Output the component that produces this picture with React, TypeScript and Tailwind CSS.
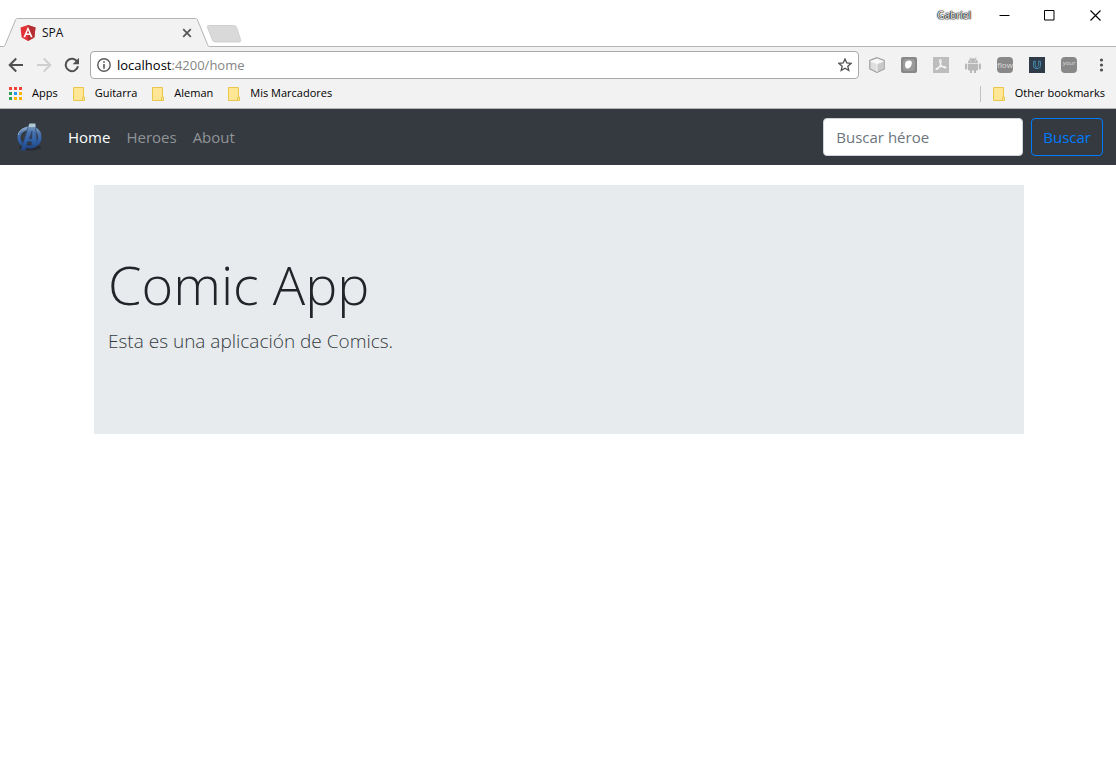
import React from "react";

const uiFont = "font-['Open_Sans','Noto_Sans',sans-serif]";

function AngularIcon() {
  return (
    <svg width="16" height="16" viewBox="0 0 16 16" aria-hidden="true">
      <path d="M8 0 15.5 2.6 14.3 12.5 8 16 1.7 12.5.5 2.6Z" fill="#e23237" />
      <path d="M8 0 15.5 2.6 14.3 12.5 8 16Z" fill="#b52e31" />
      <path d="M8 1.8 3.4 12.2h1.8l.9-2.3h3.8l.9 2.3h1.8ZM8 5.2l1.3 3.2H6.7Z" fill="#fff" fillRule="evenodd" />
    </svg>
  );
}

function Folder() {
  return (
    <svg width="12" height="14" viewBox="0 0 12 14" aria-hidden="true">
      <path d="M.5.5h10v9.5h1v3.5H.5Z" fill="#ffe694" stroke="#e9c64d" />
      <path d="M9.5 13V10.5h1" fill="none" stroke="#e9c64d" />
    </svg>
  );
}

function AppsGrid() {
  const colors = ["#f44336", "#f44336", "#f44336", "#2e9e5b", "#2196f3", "#ffb300", "#2e9e5b", "#ffb300", "#ffb300"];
  return (
    <svg width="13" height="13" viewBox="0 0 13 13" aria-hidden="true">
      {colors.map((c, i) => (
        <rect key={i} x={(i % 3) * 5} y={Math.floor(i / 3) * 5} width="3" height="3" fill={c} />
      ))}
    </svg>
  );
}

function TabStrip() {
  return (
    <div className="flex h-[47px] items-start border-b border-[#b4b4b4] bg-white">
      <div className="relative mt-[18px] flex h-[29px] w-[210px] shrink-0 items-center pl-5 pr-[18px]">
        <svg className="absolute inset-0" width="210" height="29" viewBox="0 0 210 29" aria-hidden="true">
          <path d="M0 28.5H3C4.500 28.500 4.800 27.500 5.300 26.500L15.500 2C16 .9 16.500.5 17.500.5H195.500C196.500.5 197 .9 197.500 2L207.500 26.500C208 27.800 208.500 28.500 210 28.500V29H0Z" fill="#f2f2f2" />
          <path d="M0 28.500H3C4.500 28.500 4.800 27.500 5.300 26.500L15.500 2C16 .9 16.500.5 17.500.5H195.500C196.500.5 197 .9 197.500 2L207.500 26.500C208 27.800 208.500 28.500 210 28.500" fill="none" stroke="#b4b4b4" />
        </svg>
        <span className="relative flex flex-1 items-center gap-1.5 text-xs text-[#111]">
          <AngularIcon />
          SPA
        </span>
        <button aria-label="Close tab" className="relative">
          <svg width="10" height="10" viewBox="0 0 10 10">
            <path d="m1.200 1.200 7.600 7.600m0-7.600-7.600 7.600" stroke="#555" strokeWidth="1.700" />
          </svg>
        </button>
      </div>
      <button aria-label="New tab" className="-ml-1 mt-[25px]">
        <svg width="36" height="18" viewBox="0 0 36 18">
          <path d="M2.500.5H27.500C29 .5 30 1 30.500 2.300L34.500 14.500C35 16 34.500 17 33 17H9.500C8 17 7 16.500 6.500 15L1.500 2.500C1 1.200 1.500.5 2.500.5Z" fill="#d9d9d9" stroke="#cfcfcf" />
        </svg>
      </button>
      <div className="ml-auto flex items-center pr-[15px] pt-[7px]">
        <span className="mr-7 text-[10px] leading-4 text-white [text-shadow:0_0_1px_#000,0_0_1px_#000,0_0_1px_#000,0_0_2px_#333]">Gabriel</span>
        <button aria-label="Minimize" className="mr-[34px]">
          <svg width="11" height="12" viewBox="0 0 11 12"><path d="M.5 6.500h10" stroke="#000" /></svg>
        </button>
        <button aria-label="Maximize" className="mr-[35px]">
          <svg width="11" height="12" viewBox="0 0 11 12"><path d="M.5 1.500h9.500v9.500H.5Z" fill="none" stroke="#000" /></svg>
        </button>
        <button aria-label="Close">
          <svg width="11" height="12" viewBox="0 0 11 12"><path d="m.5 1.500 10 10m0-10-10 10" stroke="#000" strokeWidth="1.100" /></svg>
        </button>
      </div>
    </div>
  );
}

function Extensions() {
  return (
    <div className="flex items-center gap-4">
      <button aria-label="Cube">
        <svg width="16" height="16" viewBox="0 0 16 16">
          <path d="M8 .7 15.200 3.500V12L8 15.400.8 12V3.500Z" fill="#dedede" stroke="#999" strokeWidth="1.100" />
          <path d="M8 1.500 14.300 4 8 6.700 1.700 4Z" fill="#f7f7f7" />
          <path d="M8 7 14.500 4.300v7.300L8 14.700Z" fill="#c9c9c9" />
          <path d="M8 6.800v8M1.500 4.200 8 6.800l6.500-2.600" fill="none" stroke="#fafafa" strokeWidth=".8" />
        </svg>
      </button>
      <button aria-label="Shield">
        <svg width="16" height="16" viewBox="0 0 16 16">
          <rect width="16" height="16" rx="2" fill="#888" />
          <rect x="2" y="2" width="12" height="12" rx="3" fill="#9b9b9b" />
          <path d="M5 4.500C7.500 3 11 3.300 10.800 6c-.1 3-1.800 5.500-4.300 5.500C3.700 11.500 3.500 6.500 5 4.500Z" fill="#fff" />
        </svg>
      </button>
      <button aria-label="PDF">
        <svg width="16" height="16" viewBox="0 0 16 16">
          <rect width="16" height="16" fill="#bdbdbd" />
          <path d="M7.300 2.500C8.800 2.300 8 5.500 7.500 7.200 6.500 10 4.500 13 3.200 12.500 2 11.500 7 9.600 10 9.500c3.500 0 3.500 1.700 2 1.500C9.500 10.500 6.500 7 6.600 4c0-1 .3-1.500.7-1.500Z" fill="none" stroke="#f5f5f5" strokeWidth="1.100" />
        </svg>
      </button>
      <button aria-label="Android">
        <svg width="16" height="16" viewBox="0 0 16 16" fill="#b9b9b9">
          <path d="M3 6C3 3.800 4.200 2.500 5.400 1.900L4.500.4l.5-.3.900 1.500a6 6 0 0 1 4.200 0L11 .1l.5.3-.9 1.500C11.800 2.500 13 3.800 13 6Z" />
          <path d="M3 6.800h10v5.700c0 .6-.4 1-1 1h-1V16H9v-2.500H7V16H5v-2.500H4c-.6 0-1-.4-1-1Z" />
          <rect y="6.500" width="2.200" height="6" rx="1.100" /><rect x="13.800" y="6.500" width="2.200" height="6" rx="1.100" />
          <path d="M5.200 3.500h1v1h-1Zm4.600 0h1v1h-1Z" fill="#f2f2f2" />
        </svg>
      </button>
      <button className="flex size-4 items-center justify-center overflow-hidden rounded-sm bg-[#888] text-[8px] leading-none text-[#ddd]">flow</button>
      <button aria-label="Udacity">
        <svg width="16" height="16" viewBox="0 0 16 16">
          <path d="M0 0h16v16H0Z" fill="#303b49" />
          <path d="M4.500 4.500 6.200 4V7.500C6.200 9.500 7 10.800 8.300 11.500 6 12 4.500 10.700 4.500 8.500ZM9.700 4 11.500 4.500V8.500C11.500 10.500 10.200 11.700 8.300 11.500M9.700 4V8C9.700 9 9.200 9.700 8.200 10" fill="none" stroke="#4592b8" strokeWidth=".9" />
        </svg>
      </button>
      <button className="flex size-4 items-center justify-center overflow-hidden rounded-sm bg-[#888] pb-1 text-[6px] leading-none text-[#ddd]">your</button>
    </div>
  );
}

function Toolbar() {
  return (
    <div className="flex h-8 items-end pl-2 pr-3">
      <div className="flex h-7 items-center">
        <button aria-label="Back" className="mr-3">
          <svg width="16" height="16" viewBox="0 0 16 16"><path d="M15 8H2M8.200 1.500 1.700 8l6.500 6.500" fill="none" stroke="#505050" strokeWidth="2" /></svg>
        </button>
        <button aria-label="Forward" className="mr-3">
          <svg width="16" height="16" viewBox="0 0 16 16"><path d="M1 8h13M7.800 1.500 14.300 8l-6.500 6.500" fill="none" stroke="#cfcfcf" strokeWidth="2" /></svg>
        </button>
        <button aria-label="Reload" className="mr-2.5">
          <svg width="16" height="16" viewBox="0 0 16 16"><path d="M13.200 4.700A6.200 6.200 0 1 0 14 9.300" fill="none" stroke="#505050" strokeWidth="2" /><path d="M15 .8V7.200H8.700Z" fill="#505050" /></svg>
        </button>
      </div>
      <div className="mr-2.5 flex h-7 min-w-0 flex-1 items-center rounded-sm border border-[#a9a9a9] bg-white px-1.5">
        <svg width="14" height="14" viewBox="0 0 14 14" aria-hidden="true">
          <circle cx="7" cy="7" r="6.200" fill="none" stroke="#5a5a5a" strokeWidth="1.400" />
          <path d="M6.200 3.200h1.600v1.600H6.200ZM6.200 6h1.600v4.800H6.200Z" fill="#5a5a5a" />
        </svg>
        <span className="ml-1.5 flex-1 text-[13px] leading-5 text-[#858585]"><span className="text-black">localhost</span>:4200/home</span>
        <button aria-label="Bookmark this page">
          <svg width="14" height="14" viewBox="0 0 14 14"><path d="m7 1 1.800 4 4.200.4-3.200 2.800 1 4.300L7 10.200l-3.800 2.300 1-4.300L1 5.400 5.200 5Z" fill="none" stroke="#505050" strokeWidth="1.300" /></svg>
        </button>
      </div>
      <div className="flex h-7 items-center">
        <Extensions />
        <button aria-label="Menu" className="ml-[22px]">
          <svg width="5" height="14" viewBox="0 0 5 14" fill="#505050"><circle cx="2.500" cy="2" r="1.600" /><circle cx="2.500" cy="7" r="1.600" /><circle cx="2.500" cy="12" r="1.600" /></svg>
        </button>
      </div>
    </div>
  );
}

function Bookmarks() {
  return (
    <div className="flex h-[29px] items-center gap-[15px] pl-[9px] pr-[11px] text-[11px] text-black">
      <a href="#apps" className="flex items-center gap-2.5"><AppsGrid />Apps</a>
      {["Guitarra", "Aleman", "Mis Marcadores"].map((name) => (
        <a key={name} href="#folder" className="flex items-center gap-2.5"><Folder />{name}</a>
      ))}
      <a href="#other" className="ml-auto flex items-center gap-2.5">
        <span className="mr-0.5 h-4 w-px bg-[#c2c2c2]" />
        <Folder />Other bookmarks
      </a>
    </div>
  );
}

function AvengersLogo() {
  return (
    <svg width="28" height="30" viewBox="0 0 28 30" aria-hidden="true">
      <defs>
        <linearGradient id="metal" x1="0" y1="0" x2="0" y2="1">
          <stop offset="0" stopColor="#8eabc6" />
          <stop offset=".3" stopColor="#4d74ab" />
          <stop offset=".65" stopColor="#2f5fa8" />
          <stop offset="1" stopColor="#1f4485" />
        </linearGradient>
      </defs>
      <ellipse cx="15" cy="25.500" rx="11" ry="3" fill="#262a33" />
      <path d="M14 4.500a12 11 0 1 0 12.500 11A11.500 11 0 0 0 21 5.500v4a8 8 0 0 1 2 6A8.800 7.700 0 1 1 12 8.200Z" fill="url(#metal)" />
      <path fillRule="evenodd" d="M14 2h6.500l1.500 21.500h-5l-.3-4h-4.200L10 28.300H6ZM17 9l-3 8h2.800Z" fill="url(#metal)" stroke="#284a80" strokeWidth=".6" />
      <path d="M14.500 1.500h5.700l.3 3.500h-7Z" fill="#b3c9cf" />
      <path d="M3 13c1-4 4-6.500 8-7" fill="none" stroke="#8da9c6" />
    </svg>
  );
}

function Navbar() {
  return (
    <nav className="flex min-h-14 items-center bg-[#343a40] py-2 pl-[15px] pr-[13px] text-[15px]">
      <a href="#home" aria-label="Inicio" className="mr-[17px]"><AvengersLogo /></a>
      <div className="flex">
        <a href="#home" className="px-2 text-white">Home</a>
        <a href="#heroes" className="px-2 text-[#919497]">Heroes</a>
        <a href="#about" className="px-2 text-[#919497]">About</a>
      </div>
      <form className="ml-auto flex gap-2" onSubmit={(e) => e.preventDefault()}>
        <input type="text" aria-label="Buscar héroe" placeholder="Buscar héroe" className="h-[38px] w-[200px] rounded border border-[#ced4da] bg-white px-3 placeholder:text-[#6c757d]" />
        <button type="submit" className="h-[38px] rounded border border-[#007bff] px-[11px] text-[#007bff]">Buscar</button>
      </form>
    </nav>
  );
}

export default function App() {
  return (
    <div className={`min-h-screen bg-white ${uiFont}`}>
      <header className="border-b border-[#b4b4b4] bg-[#f2f2f2]">
        <TabStrip />
        <Toolbar />
        <Bookmarks />
      </header>
      <Navbar />
      <main className="pl-0.5 pt-5">
        <section className="mx-auto max-w-[930px] bg-[#e7ebee] px-3.5 pb-[78px] pt-[65px] text-[#212529]">
          <h1 className="mb-2 text-[54px] font-light leading-[68px]">Comic App</h1>
          <p className="text-[19px] font-light leading-[30px] text-[#343a40]">Esta es una aplicación de Comics.</p>
        </section>
      </main>
    </div>
  );
}
